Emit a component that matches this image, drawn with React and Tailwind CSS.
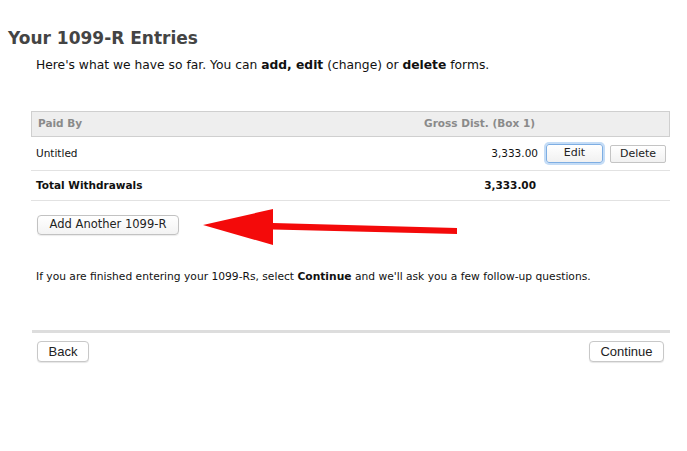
import React from "react";

const rows = [{ payer: "Untitled", amount: "3,333.00" }];

const App = () => {
  return (
    <div
      className="relative h-[451px] w-full bg-white text-[#111]"
      style={{ fontFamily: '"DejaVu Sans", Verdana, sans-serif' }}
    >
      {/* Heading */}
      <div className="pt-[27px] pl-[8px]">
        <h1 className="text-[17px] font-bold leading-[22px] text-[#444]">Your 1099-R Entries</h1>
        <p className="mt-[7px] pl-[28px] text-[12.3px] leading-[18px] text-[#111]">
          Here's what we have so far. You can <b>add, edit</b> (change) or <b>delete</b> forms.
        </p>
      </div>

      {/* Table */}
      <div className="mt-[37px] ml-[31px] mr-[17px] text-[10.5px]">
        <div className="flex h-[26px] items-center border border-[#cfcfcf] bg-[#eeeeee] font-bold text-[#8a8a8a]">
          <div className="flex-1 pl-[6px]">Paid By</div>
          <div className="pr-[134px]">Gross Dist. (Box 1)</div>
        </div>
        {rows.map((r) => (
          <div key={r.payer} className="flex h-[34px] items-center border-b border-[#e2e2e2]">
            <div className="flex-1 pl-[5px]">{r.payer}</div>
            <div className="pr-[8px]">{r.amount}</div>
            <button className="h-[19px] w-[57px] rounded-[3px] border border-[#7eaee3] bg-gradient-to-b from-white to-[#f1f1f1] shadow-[0_0_0_2px_#c4dcf6] text-[11px] text-[#222]">
              Edit
            </button>
            <button className="ml-[7px] mr-[4px] h-[18px] w-[56px] rounded-[2px] border border-[#c4c4c4] bg-gradient-to-b from-white to-[#f1f1f1] text-[11px] text-[#222]">
              Delete
            </button>
          </div>
        ))}
        <div className="flex h-[30px] items-center border-b border-[#e2e2e2] font-bold">
          <div className="flex-1 pl-[5px]">Total Withdrawals</div>
          <div className="pr-[134px]">3,333.00</div>
        </div>
      </div>

      {/* Add another */}
      <div className="mt-[10px] ml-[37px]">
        <button className="h-[20px] w-[142px] rounded-[4px] border border-[#c2c2c2] bg-gradient-to-b from-white to-[#f3f3f3] text-[11.5px] text-[#222] shadow-[0_1px_1px_rgba(0,0,0,0.08)]">
          Add Another 1099-R
        </button>
      </div>

      {/* Arrow annotation */}
      <svg className="absolute left-[200px] top-[206px]" width="262" height="42" viewBox="200 206 262 42">
        <polygon
          points="203,225 273,209 273,223 457,228 457,234 273,229.5 273,245"
          fill="#f40a0a"
        />
      </svg>

      <p className="mt-[34px] ml-[36px] text-[10.7px] leading-[16px]">
        If you are finished entering your 1099-Rs, select <b>Continue</b> and we'll ask you a few follow-up questions.
      </p>

      {/* Footer */}
      <div className="mt-[45px] ml-[32px] mr-[17px] border-t-[3px] border-[#dddddd]">
        <div
          className="flex justify-between pt-[8px] pl-[5px] pr-[6px] text-[13px] text-[#222]"
          style={{ fontFamily: '"Liberation Sans", Arial, sans-serif' }}
        >
          <button className="h-[21px] w-[52px] rounded-[4px] border border-[#c8c8c8] bg-white shadow-[0_1px_1px_rgba(0,0,0,0.1)]">
            Back
          </button>
          <button className="h-[21px] w-[75px] rounded-[4px] border border-[#c8c8c8] bg-white shadow-[0_1px_1px_rgba(0,0,0,0.1)]">
            Continue
          </button>
        </div>
      </div>
    </div>
  );
};

export default App;
